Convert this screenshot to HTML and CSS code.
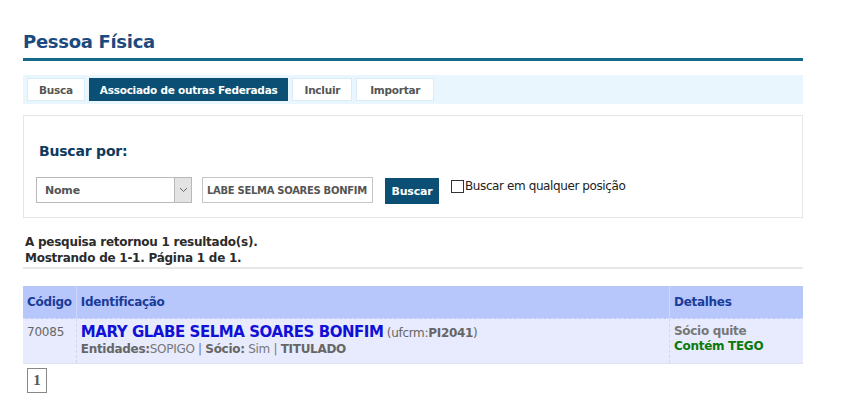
FILE: index.html
```html
<!DOCTYPE html>
<html lang="pt-BR">
<head>
    <meta charset="UTF-8">
    <title>Pessoa Física</title>
    <link rel="stylesheet" href="styles.css">
</head>
<body>
    <div class="page">
        <h1 class="page-title">Pessoa Física</h1>

        <!-- abas -->
        <div class="tabs">
            <a class="tab">Busca</a>
            <a class="tab active">Associado de outras Federadas</a>
            <a class="tab">Incluir</a>
            <a class="tab">Importar</a>
        </div>

        <div class="search-box">
            <h3>Buscar por:</h3>
            <div class="search-row">
                <div class="select">
                    <span>Nome</span>
                    <span class="select-arrow">
                        <svg width="9" height="6" viewBox="0 0 9 6"><path d="M1 1 L4.5 4.5 L8 1" fill="none" stroke="#666" stroke-width="1"/></svg>
                    </span>
                </div>
                <input type="text" class="search-input" value="LABE SELMA SOARES BONFIM">
                <button type="button" class="btn">Buscar</button>
                <label class="check"><span class="check-box"></span>Buscar em qualquer posição</label>
            </div>
        </div>

        <div class="summary">
            A pesquisa retornou 1 resultado(s).<br>
            Mostrando de 1-1. Página 1 de 1.
        </div>

        <table class="results">
            <thead>
                <tr>
                    <th class="col-code">Código</th>
                    <th>Identificação</th>
                    <th class="col-det">Detalhes</th>
                </tr>
            </thead>
            <tbody>
                <tr>
                    <td class="code">70085</td>
                    <td>
                        <span class="name">MARY GLABE SELMA SOARES BONFIM</span>
                        <span class="crm">(ufcrm:<b>PI2041</b>)</span>
                        <div class="meta"><b>Entidades:</b>SOPIGO | <b>Sócio:</b> Sim | <b>TITULADO</b></div>
                    </td>
                    <td class="det">
                        Sócio quite<br>
                        <span class="tego">Contém TEGO</span>
                    </td>
                </tr>
            </tbody>
        </table>

        <div class="pager"><span class="page-num">1</span></div>
    </div>
</body>
</html>
```

FILE: styles.css
```css
/* Base */
body {
    margin: 0;
    font-family: 'DejaVu Sans', Verdana, sans-serif;
    font-size: 11px;
    color: #333;
    background: #fff;
    letter-spacing: -0.2px;
}

.page {
    width: 780px;
    margin-left: 23px;
    padding-top: 31px;
}

.page-title {
    margin: 0;
    font-size: 18px;
    color: #1b4a80;
    padding-bottom: 5px;
    border-bottom: 3px solid #17698a;
    line-height: 22px;
    letter-spacing: -0.3px;
}

/* Abas */
.tabs {
    margin-top: 14px;
    background: #eaf6fd;
    padding: 3px 4px;
    display: flex;
    gap: 4px;
    height: 23px;
}

.tab {
    display: block;
    background: #fff;
    border: 1px solid #d8ecf7;
    padding: 0 11px;
    line-height: 23px;
    font-weight: bold;
    color: #555;
    font-size: 10.5px;
    letter-spacing: -0.25px;
}

.tab.active {
    background: #0b4f74;
    border-color: #0b4f74;
    color: #fff;
    padding: 0 10px;
}

.tab:last-child {
    padding: 0 13px;
}

/* Caixa de busca */
.search-box {
    margin-top: 11px;
    border: 1px solid #e6e6e6;
    padding: 26px 12px 13px 12px;
    height: 62px;
}

.search-box h3 {
    margin: 0 0 0 3px;
    font-size: 14px;
    line-height: 18px;
    color: #0d3a60;
}

.search-row {
    display: flex;
    align-items: flex-start;
    margin-top: 17px;
}

.select {
    height: 24px;
    border: 1px solid #b9b9b9;
    display: flex;
    align-items: center;
    justify-content: space-between;
    padding-left: 8px;
    font-weight: bold;
    color: #555;
    width: 146px;
}

.select-arrow {
    width: 16px;
    height: 24px;
    background: #e3e3e3;
    border-left: 1px solid #b9b9b9;
    display: flex;
    align-items: center;
    justify-content: center;
}

.search-input {
    margin-left: 10px;
    width: 161px;
    height: 24px;
    padding: 0 4px;
    border: 1px solid #c6c6c6;
    font-family: inherit;
    font-size: 10px;
    font-weight: bold;
    color: #555;
    letter-spacing: -0.3px;
}

.btn {
    margin-left: 12px;
    margin-top: 1px;
    height: 26px;
    width: 54px;
    background: #0b4f74;
    color: #fff;
    border: none;
    font-family: inherit;
    font-size: 11px;
    font-weight: bold;
    padding: 0;
    letter-spacing: -0.2px;
}

.check {
    margin-left: 12px;
    margin-top: 2px;
    display: flex;
    align-items: center;
    font-size: 12px;
    color: #222;
    letter-spacing: -0.4px;
}

.check-box {
    width: 11px;
    height: 11px;
    border: 1px solid #333;
    margin-right: 1px;
}

/* Resumo */
.summary {
    margin-top: 16px;
    padding: 0 2px 1px;
    font-weight: bold;
    font-size: 12px;
    line-height: 16px;
    color: #2b2b2b;
    border-bottom: 2px solid #e8e8e8;
    letter-spacing: -0.25px;
}

/* Tabela */
.results {
    margin-top: 17px;
    width: 100%;
    border-collapse: collapse;
}

.results th {
    background: #b7c7fb;
    color: #1a3c99;
    text-align: left;
    font-size: 12px;
    height: 32px;
    padding: 0 4px;
    border-left: 1px solid #cdd8fb;
    border-bottom: 1px dashed #d6ddfa;
    letter-spacing: -0.3px;
}

.results th:first-child,
.results td:first-child {
    border-left: none;
}

.results td {
    background: #e7ebfd;
    vertical-align: top;
    padding: 4px 4px 7px;
    border-left: 1px dashed #d0d6ec;
    border-bottom: 1px solid #dfe3f0;
}

.col-code { width: 43px; }
.col-det { width: 125px; }

.code {
    color: #666;
    font-size: 12px;
    padding-top: 6px !important;
}

.name {
    color: #1010d6;
    font-weight: bold;
    font-size: 15px;
    letter-spacing: -0.45px;
}

.crm {
    color: #666;
    font-size: 12px;
    letter-spacing: -0.3px;
}

.meta {
    color: #777;
    font-size: 12px;
    margin-top: 1px;
    letter-spacing: -0.3px;
}

.meta b {
    color: #666;
}

.det {
    color: #777;
    font-size: 12px;
    font-weight: bold;
    padding-top: 5px !important;
    line-height: 15px;
    letter-spacing: -0.3px;
}

.tego {
    color: #0b7a0b;
}

/* Paginação */
.pager {
    margin-top: 4px;
    padding-left: 4px;
}

.page-num {
    display: inline-block;
    width: 18px;
    height: 23px;
    line-height: 23px;
    text-align: center;
    border: 1px solid #888;
    font-family: 'Liberation Serif', serif;
    font-weight: bold;
    font-size: 15px;
    color: #555;
}
```
